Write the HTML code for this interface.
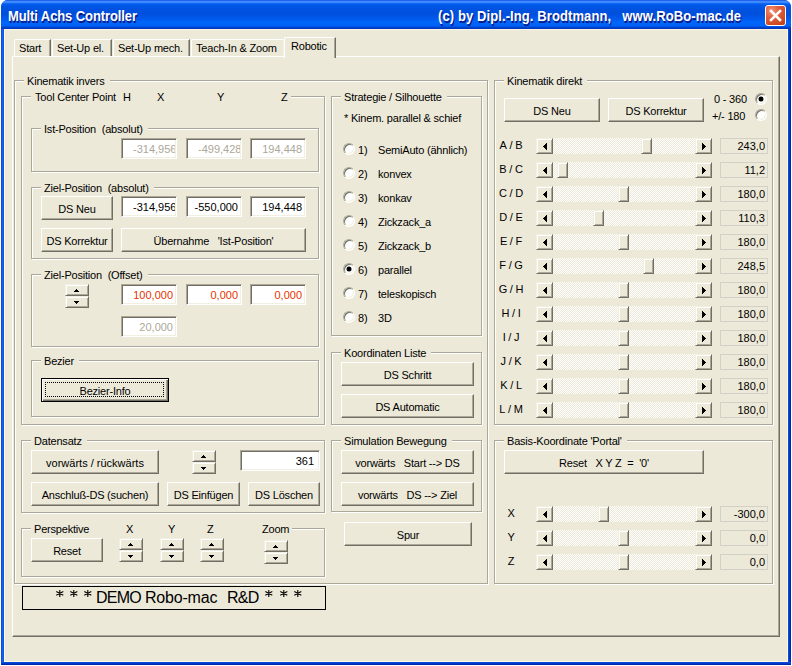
<!DOCTYPE html><html><head><meta charset="utf-8"><style>
html,body{margin:0;padding:0;}
body{width:792px;height:666px;position:relative;overflow:hidden;background:#fff;font-family:"Liberation Sans",sans-serif;font-size:11px;color:#000;letter-spacing:-0.2px;}
div{position:absolute;box-sizing:border-box;}
.t{white-space:nowrap;line-height:13px;}
.fg{border:1px solid #ACA899;}
.fw{border:1px solid #fff;}
.fl{background:#ECE9D8;padding:0 5px 0 3px;white-space:nowrap;line-height:13px;}
.btn{background:#ECE9D8;border-top:1px solid #fff;border-left:1px solid #fff;border-right:1px solid #716F64;border-bottom:1px solid #716F64;box-shadow:inset -1px -1px 0 #ACA899;display:flex;align-items:center;justify-content:center;white-space:nowrap;}
.btn span{position:relative;top:1px;}
.btn.def{border:1px solid #000;box-shadow:inset 1px 1px 0 #fff,inset -1px -1px 0 #716F64,inset -2px -2px 0 #ACA899;}
.btn.def:after{content:"";position:absolute;left:3px;top:3px;right:4px;bottom:4px;border:1px dotted #000;}
.tb{background:#fff;border-top:1px solid #ACA899;border-left:1px solid #ACA899;border-right:1px solid #fff;border-bottom:1px solid #fff;box-shadow:inset 1px 1px 0 #716F64,inset -1px -1px 0 #F1EFE2;white-space:nowrap;overflow:hidden;}
.tb span{position:absolute;right:3px;top:4px;line-height:13px;letter-spacing:0;}
.spin{background:#ECE9D8;border-top:1px solid #F1EFE2;border-left:1px solid #F1EFE2;border-right:1px solid #716F64;border-bottom:1px solid #716F64;box-shadow:inset 1px 1px 0 #fff,inset -1px -1px 0 #ACA899;}
.spin i{position:absolute;left:50%;margin-left:-3px;width:0;height:0;border-left:3px solid transparent;border-right:3px solid transparent;}
.spin i.up{top:3px;border-bottom:3px solid #000;}
.spin i.dn{top:4px;border-top:3px solid #000;}
.sbtn{background:#ECE9D8;border-top:1px solid #F1EFE2;border-left:1px solid #F1EFE2;border-right:1px solid #716F64;border-bottom:1px solid #716F64;box-shadow:inset 1px 1px 0 #fff,inset -1px -1px 0 #ACA899;}
.sbtn i{position:absolute;top:4px;width:0;height:0;border-top:4px solid transparent;border-bottom:4px solid transparent;}
.sbtn i.lf{left:6px;border-right:4px solid #000;}
.sbtn i.rt{left:6px;border-left:4px solid #000;}
.track{background:repeating-conic-gradient(#fff 0 25%,#ECE9D8 0 50%) 0 0/2px 2px;}
.vb{border:1px solid #D4D0C8;white-space:nowrap;}
.vb span{position:absolute;right:2px;top:1px;line-height:13px;letter-spacing:0;}
.radio{width:12px;height:12px;border-radius:50%;background:#fff;border:1px solid;border-color:#ACA899 #fff #fff #ACA899;box-shadow:inset 1px 1px 0 #716F64,inset -1px -1px 0 #F1EFE2;}
.radio i{position:absolute;left:3px;top:3px;width:4px;height:4px;background:#000;border-radius:50%;box-shadow:0 0 0 0.5px #000;}
.tab{background:#ECE9D8;border-top:1px solid #fff;border-left:1px solid #fff;border-right:1px solid #716F64;box-shadow:inset -1px 0 0 #ACA899;border-top-left-radius:2px;}
</style></head><body>

<div style="left:0;top:0;width:792px;height:666px;background:#fff"></div>
<div style="left:1px;top:0;width:790px;height:665px;background:#0A3BD7;border-radius:7px 7px 0 0"></div>
<div style="left:1px;top:0;width:790px;height:29px;border-radius:7px 7px 0 0;background:linear-gradient(#0831D9 0px,#3D8EFF 1px,#3A88FC 2.5px,#0E67F4 3.5px,#0058E8 5px,#0053E0 8px,#0050DD 14px,#005AEE 19px,#0066FA 22px,#0062F6 26px,#0046D5 27px,#0033B8 29px)"></div>
<div style="left:1px;top:29px;width:3px;height:633px;background:linear-gradient(90deg,#0A3AD5,#1466F3 50%,#0651E0)"></div>
<div style="left:788px;top:29px;width:3px;height:633px;background:linear-gradient(90deg,#0652E2,#0038CC 50%,#001E9E)"></div>
<div style="left:1px;top:662px;width:790px;height:3px;background:linear-gradient(#0652E2,#0038CC 50%,#001E9E)"></div>
<div style="left:4px;top:29px;width:784px;height:633px;background:#FFF7E0"></div>
<div style="left:5px;top:30px;width:782px;height:631px;background:#ECE9D8"></div>
<div class="t" style="left:8px;top:8px;font-weight:bold;font-size:13px;line-height:16px;color:#fff;text-shadow:1px 1px 0 #0A1883;letter-spacing:-0.1px;transform:scaleY(1.12);transform-origin:0 0">Multi Achs Controller</div>
<div class="t" style="left:438px;top:8px;font-weight:bold;font-size:13px;line-height:16px;color:#fff;text-shadow:1px 1px 0 #0A1883;white-space:pre;letter-spacing:0.1px;transform:scaleY(1.12);transform-origin:0 0">(c) by Dipl.-Ing. Brodtmann,   www.RoBo-mac.de</div>
<div style="left:765px;top:5px;width:21px;height:21px;border:1px solid #fff;border-radius:3px;background:radial-gradient(circle at 30% 25%,#F0967A 0,#E2603E 35%,#CC4A22 75%,#B83A18 100%)"></div>
<svg style="position:absolute;left:765px;top:5px" width="21" height="21"><path d="M6 6 L15 15 M15 6 L6 15" stroke="#fff" stroke-width="2.6" stroke-linecap="square"/></svg>
<div style="left:12px;top:56px;width:768px;height:581px;background:#ECE9D8;border-top:1px solid #fff;border-left:1px solid #fff;border-right:1px solid #716F64;border-bottom:1px solid #716F64;box-shadow:inset -1px -1px 0 #ACA899"></div>
<div class="tab" style="left:14px;top:39px;width:37px;height:17px;"></div>
<div class="t" style="left:19px;top:42px;">Start</div>
<div class="tab" style="left:52px;top:39px;width:60px;height:17px;"></div>
<div class="t" style="left:57px;top:42px;">Set-Up el.</div>
<div class="tab" style="left:113px;top:39px;width:77px;height:17px;"></div>
<div class="t" style="left:118px;top:42px;">Set-Up mech.</div>
<div class="tab" style="left:191px;top:39px;width:93px;height:17px;border-right:1px solid #F1EFE2;box-shadow:none;"></div>
<div class="t" style="left:196px;top:42px;">Teach-In &amp; Zoom</div>
<div class="tab" style="left:284px;top:37px;width:52px;height:21px"></div>
<div class="t" style="left:291px;top:40px;">Robotic</div>
<div class="fw" style="left:15px;top:81px;width:474px;height:504px"></div>
<div class="fg" style="left:14px;top:80px;width:474px;height:504px"></div>
<div class="fl" style="left:24px;top:75px">Kinematik invers</div>
<div class="fw" style="left:22px;top:97px;width:304px;height:329px"></div>
<div class="fg" style="left:21px;top:96px;width:304px;height:329px"></div>
<div style="left:31px;top:91px;width:260px;height:13px;background:#ECE9D8"></div>
<div class="t" style="left:35px;top:91px;">Tool Center Point</div>
<div class="t" style="left:123px;top:91px;">H</div>
<div class="t" style="left:157px;top:91px;">X</div>
<div class="t" style="left:217px;top:91px;">Y</div>
<div class="t" style="left:281px;top:91px;">Z</div>
<div class="fw" style="left:32px;top:129px;width:288px;height:44px"></div>
<div class="fg" style="left:31px;top:128px;width:288px;height:44px"></div>
<div class="fl" style="left:41px;top:123px">Ist-Position&nbsp;&nbsp;(absolut)</div>
<div class="fw" style="left:32px;top:188px;width:288px;height:72px"></div>
<div class="fg" style="left:31px;top:187px;width:288px;height:72px"></div>
<div class="fl" style="left:41px;top:182px">Ziel-Position&nbsp;&nbsp;(absolut)</div>
<div class="fw" style="left:32px;top:275px;width:288px;height:73px"></div>
<div class="fg" style="left:31px;top:274px;width:288px;height:73px"></div>
<div class="fl" style="left:41px;top:269px">Ziel-Position&nbsp;&nbsp;(Offset)</div>
<div class="fw" style="left:32px;top:361px;width:288px;height:57px"></div>
<div class="fg" style="left:31px;top:360px;width:288px;height:57px"></div>
<div class="fl" style="left:41px;top:355px">Bezier</div>
<div class="fw" style="left:332px;top:97px;width:151px;height:240px"></div>
<div class="fg" style="left:331px;top:96px;width:151px;height:240px"></div>
<div class="fl" style="left:341px;top:91px">Strategie / Silhouette</div>
<div class="fw" style="left:332px;top:353px;width:151px;height:73px"></div>
<div class="fg" style="left:331px;top:352px;width:151px;height:73px"></div>
<div class="fl" style="left:341px;top:347px">Koordinaten Liste</div>
<div class="fw" style="left:22px;top:441px;width:304px;height:73px"></div>
<div class="fg" style="left:21px;top:440px;width:304px;height:73px"></div>
<div class="fl" style="left:31px;top:435px">Datensatz</div>
<div class="fw" style="left:22px;top:529px;width:304px;height:49px"></div>
<div class="fg" style="left:21px;top:528px;width:304px;height:49px"></div>
<div style="left:31px;top:523px;width:261px;height:13px;background:#ECE9D8"></div>
<div class="t" style="left:34px;top:523px;">Perspektive</div>
<div class="fw" style="left:332px;top:441px;width:151px;height:72px"></div>
<div class="fg" style="left:331px;top:440px;width:151px;height:72px"></div>
<div class="fl" style="left:341px;top:435px">Simulation Bewegung</div>
<div class="fw" style="left:495px;top:81px;width:279px;height:345px"></div>
<div class="fg" style="left:494px;top:80px;width:279px;height:345px"></div>
<div class="fl" style="left:504px;top:75px">Kinematik direkt</div>
<div class="fw" style="left:495px;top:441px;width:279px;height:144px"></div>
<div class="fg" style="left:494px;top:440px;width:279px;height:144px"></div>
<div class="fl" style="left:504px;top:435px">Basis-Koordinate 'Portal'</div>
<div class="tb" style="left:121px;top:138px;width:56px;height:21px;color:#ACA899"><span style="right:1px;left:11px;overflow:hidden">-314,956</span></div>
<div class="tb" style="left:186px;top:138px;width:56px;height:21px;color:#ACA899"><span style="right:1px;left:11px;overflow:hidden">-499,428</span></div>
<div class="tb" style="left:250px;top:138px;width:56px;height:21px;color:#ACA899"><span>194,448</span></div>
<div class="btn " style="left:41px;top:196px;width:72px;height:24px;"><span>DS Neu</span></div>
<div class="tb" style="left:121px;top:196px;width:56px;height:21px;color:#000"><span style="right:1px;left:11px;overflow:hidden">-314,956</span></div>
<div class="tb" style="left:186px;top:196px;width:56px;height:21px;color:#000"><span>-550,000</span></div>
<div class="tb" style="left:250px;top:196px;width:56px;height:21px;color:#000"><span>194,448</span></div>
<div class="btn " style="left:41px;top:228px;width:72px;height:24px;"><span>DS Korrektur</span></div>
<div class="btn " style="left:121px;top:228px;width:185px;height:24px;"><span>Übernahme&nbsp;&nbsp;&nbsp;'Ist-Position'</span></div>
<div class="spin" style="left:65px;top:284px;width:24px;height:12px"></div>
<svg style="position:absolute;left:74px;top:289px" width="5" height="3" shape-rendering="crispEdges"><path d="M2 0h1v1h-1z M1 1h3v1h-3z M0 2h5v1h-5z" fill="#000"/></svg>
<div class="spin" style="left:65px;top:296px;width:24px;height:12px"></div>
<svg style="position:absolute;left:74px;top:301px" width="5" height="3" shape-rendering="crispEdges"><path d="M0 0h5v1h-5z M1 1h3v1h-3z M2 2h1v1h-1z" fill="#000"/></svg>
<div class="tb" style="left:121px;top:284px;width:56px;height:21px;color:#E63300"><span>100,000</span></div>
<div class="tb" style="left:186px;top:284px;width:56px;height:21px;color:#E63300"><span>0,000</span></div>
<div class="tb" style="left:250px;top:284px;width:56px;height:21px;color:#E63300"><span>0,000</span></div>
<div class="tb" style="left:121px;top:316px;width:56px;height:21px;color:#ACA899"><span>20,000</span></div>
<div class="btn def" style="left:41px;top:378px;width:128px;height:24px;"><span>Bezier-Info</span></div>
<div class="t" style="left:344px;top:112px;">* Kinem. parallel &amp; schief</div>
<div class="radio" style="left:343px;top:143px"></div>
<div class="t" style="left:358px;top:144px;">1)</div>
<div class="t" style="left:378px;top:144px;">SemiAuto (ähnlich)</div>
<div class="radio" style="left:343px;top:167px"></div>
<div class="t" style="left:358px;top:168px;">2)</div>
<div class="t" style="left:378px;top:168px;">konvex</div>
<div class="radio" style="left:343px;top:191px"></div>
<div class="t" style="left:358px;top:192px;">3)</div>
<div class="t" style="left:378px;top:192px;">konkav</div>
<div class="radio" style="left:343px;top:215px"></div>
<div class="t" style="left:358px;top:216px;">4)</div>
<div class="t" style="left:378px;top:216px;">Zickzack_a</div>
<div class="radio" style="left:343px;top:239px"></div>
<div class="t" style="left:358px;top:240px;">5)</div>
<div class="t" style="left:378px;top:240px;">Zickzack_b</div>
<div class="radio" style="left:343px;top:263px"><i></i></div>
<div class="t" style="left:358px;top:264px;">6)</div>
<div class="t" style="left:378px;top:264px;">parallel</div>
<div class="radio" style="left:343px;top:287px"></div>
<div class="t" style="left:358px;top:288px;">7)</div>
<div class="t" style="left:378px;top:288px;">teleskopisch</div>
<div class="radio" style="left:343px;top:311px"></div>
<div class="t" style="left:358px;top:312px;">8)</div>
<div class="t" style="left:378px;top:312px;">3D</div>
<div class="btn " style="left:341px;top:362px;width:133px;height:24px;"><span>DS Schritt</span></div>
<div class="btn " style="left:341px;top:394px;width:133px;height:24px;"><span>DS Automatic</span></div>
<div class="btn " style="left:31px;top:450px;width:128px;height:24px;letter-spacing:0"><span>vorwärts / rückwärts</span></div>
<div class="spin" style="left:192px;top:450px;width:24px;height:12px"></div>
<svg style="position:absolute;left:201px;top:455px" width="5" height="3" shape-rendering="crispEdges"><path d="M2 0h1v1h-1z M1 1h3v1h-3z M0 2h5v1h-5z" fill="#000"/></svg>
<div class="spin" style="left:192px;top:462px;width:24px;height:12px"></div>
<svg style="position:absolute;left:201px;top:467px" width="5" height="3" shape-rendering="crispEdges"><path d="M0 0h5v1h-5z M1 1h3v1h-3z M2 2h1v1h-1z" fill="#000"/></svg>
<div class="tb" style="left:240px;top:450px;width:80px;height:21px"><span style="right:5px">361</span></div>
<div class="btn " style="left:31px;top:482px;width:128px;height:24px;"><span>Anschluß-DS (suchen)</span></div>
<div class="btn " style="left:167px;top:482px;width:73px;height:24px;"><span>DS Einfügen</span></div>
<div class="btn " style="left:248px;top:482px;width:72px;height:24px;"><span>DS Löschen</span></div>
<div class="btn " style="left:31px;top:538px;width:72px;height:24px;"><span>Reset</span></div>
<div class="t" style="left:126px;top:523px;">X</div>
<div class="t" style="left:168px;top:523px;">Y</div>
<div class="t" style="left:207px;top:523px;">Z</div>
<div class="t" style="left:262px;top:523px;">Zoom</div>
<div class="spin" style="left:119px;top:538px;width:24px;height:12px"></div>
<svg style="position:absolute;left:128px;top:543px" width="5" height="3" shape-rendering="crispEdges"><path d="M2 0h1v1h-1z M1 1h3v1h-3z M0 2h5v1h-5z" fill="#000"/></svg>
<div class="spin" style="left:119px;top:550px;width:24px;height:12px"></div>
<svg style="position:absolute;left:128px;top:555px" width="5" height="3" shape-rendering="crispEdges"><path d="M0 0h5v1h-5z M1 1h3v1h-3z M2 2h1v1h-1z" fill="#000"/></svg>
<div class="spin" style="left:160px;top:538px;width:24px;height:12px"></div>
<svg style="position:absolute;left:169px;top:543px" width="5" height="3" shape-rendering="crispEdges"><path d="M2 0h1v1h-1z M1 1h3v1h-3z M0 2h5v1h-5z" fill="#000"/></svg>
<div class="spin" style="left:160px;top:550px;width:24px;height:12px"></div>
<svg style="position:absolute;left:169px;top:555px" width="5" height="3" shape-rendering="crispEdges"><path d="M0 0h5v1h-5z M1 1h3v1h-3z M2 2h1v1h-1z" fill="#000"/></svg>
<div class="spin" style="left:200px;top:538px;width:24px;height:12px"></div>
<svg style="position:absolute;left:209px;top:543px" width="5" height="3" shape-rendering="crispEdges"><path d="M2 0h1v1h-1z M1 1h3v1h-3z M0 2h5v1h-5z" fill="#000"/></svg>
<div class="spin" style="left:200px;top:550px;width:24px;height:12px"></div>
<svg style="position:absolute;left:209px;top:555px" width="5" height="3" shape-rendering="crispEdges"><path d="M0 0h5v1h-5z M1 1h3v1h-3z M2 2h1v1h-1z" fill="#000"/></svg>
<div class="spin" style="left:264px;top:540px;width:24px;height:12px"></div>
<svg style="position:absolute;left:273px;top:545px" width="5" height="3" shape-rendering="crispEdges"><path d="M2 0h1v1h-1z M1 1h3v1h-3z M0 2h5v1h-5z" fill="#000"/></svg>
<div class="spin" style="left:264px;top:552px;width:24px;height:12px"></div>
<svg style="position:absolute;left:273px;top:557px" width="5" height="3" shape-rendering="crispEdges"><path d="M0 0h5v1h-5z M1 1h3v1h-3z M2 2h1v1h-1z" fill="#000"/></svg>
<div class="btn " style="left:341px;top:450px;width:133px;height:24px;"><span>vorwärts&nbsp;&nbsp;&nbsp;Start --&gt; DS</span></div>
<div class="btn " style="left:341px;top:482px;width:133px;height:24px;"><span>vorwärts&nbsp;&nbsp;&nbsp;DS --&gt; Ziel</span></div>
<div class="btn " style="left:344px;top:522px;width:128px;height:24px;"><span>Spur</span></div>
<div style="left:22px;top:586px;width:304px;height:24px;border:1px solid #000"></div>
<div class="t" style="left:96px;top:588px;font-size:16px;line-height:20px;letter-spacing:-0.8px">DEMO</div>
<div class="t" style="left:145px;top:588px;font-size:16px;line-height:20px;letter-spacing:-0.2px">Robo-mac</div>
<div class="t" style="left:227px;top:588px;font-size:16px;line-height:20px;letter-spacing:-0.8px">R&amp;D</div>
<svg style="position:absolute;left:55.7px;top:590px" width="8" height="7"><path d="M3.8 0 V7 M0.3 1.6 L7.3 5.2 M0.3 5.2 L7.3 1.6" stroke="#000" stroke-width="1.1" fill="none"/></svg>
<svg style="position:absolute;left:69.7px;top:590px" width="8" height="7"><path d="M3.8 0 V7 M0.3 1.6 L7.3 5.2 M0.3 5.2 L7.3 1.6" stroke="#000" stroke-width="1.1" fill="none"/></svg>
<svg style="position:absolute;left:83.7px;top:590px" width="8" height="7"><path d="M3.8 0 V7 M0.3 1.6 L7.3 5.2 M0.3 5.2 L7.3 1.6" stroke="#000" stroke-width="1.1" fill="none"/></svg>
<svg style="position:absolute;left:265px;top:590px" width="8" height="7"><path d="M3.8 0 V7 M0.3 1.6 L7.3 5.2 M0.3 5.2 L7.3 1.6" stroke="#000" stroke-width="1.1" fill="none"/></svg>
<svg style="position:absolute;left:280px;top:590px" width="8" height="7"><path d="M3.8 0 V7 M0.3 1.6 L7.3 5.2 M0.3 5.2 L7.3 1.6" stroke="#000" stroke-width="1.1" fill="none"/></svg>
<svg style="position:absolute;left:294px;top:590px" width="8" height="7"><path d="M3.8 0 V7 M0.3 1.6 L7.3 5.2 M0.3 5.2 L7.3 1.6" stroke="#000" stroke-width="1.1" fill="none"/></svg>
<div class="btn " style="left:504px;top:98px;width:96px;height:24px;"><span>DS Neu</span></div>
<div class="btn " style="left:608px;top:98px;width:96px;height:24px;"><span>DS Korrektur</span></div>
<div class="t" style="left:714px;top:93px;">0 - 360</div>
<div class="t" style="left:712px;top:110px;">+/- 180</div>
<div class="radio" style="left:755px;top:93px"><i></i></div>
<div class="radio" style="left:755px;top:109px"></div>
<div class="track" style="left:553px;top:138px;width:142px;height:16px"></div>
<div class="sbtn" style="left:536px;top:138px;width:17px;height:16px"></div>
<svg style="position:absolute;left:543px;top:143px" width="4" height="7" shape-rendering="crispEdges"><path d="M3 0h1v7h-1z M2 1h1v5h-1z M1 2h1v3h-1z M0 3h1v1h-1z" fill="#000"/></svg>
<div class="sbtn" style="left:695px;top:138px;width:17px;height:16px"></div>
<svg style="position:absolute;left:702px;top:143px" width="4" height="7" shape-rendering="crispEdges"><path d="M0 0h1v7h-1z M1 1h1v5h-1z M2 2h1v3h-1z M3 3h1v1h-1z" fill="#000"/></svg>
<div class="sbtn" style="left:641px;top:138px;width:11px;height:16px"></div>
<div class="vb" style="left:720px;top:138px;width:48px;height:16px"><span>243,0</span></div>
<div class="t" style="left:491px;top:139px;width:40px;text-align:center">A&nbsp;/&nbsp;B</div>
<div class="track" style="left:553px;top:162px;width:142px;height:16px"></div>
<div class="sbtn" style="left:536px;top:162px;width:17px;height:16px"></div>
<svg style="position:absolute;left:543px;top:167px" width="4" height="7" shape-rendering="crispEdges"><path d="M3 0h1v7h-1z M2 1h1v5h-1z M1 2h1v3h-1z M0 3h1v1h-1z" fill="#000"/></svg>
<div class="sbtn" style="left:695px;top:162px;width:17px;height:16px"></div>
<svg style="position:absolute;left:702px;top:167px" width="4" height="7" shape-rendering="crispEdges"><path d="M0 0h1v7h-1z M1 1h1v5h-1z M2 2h1v3h-1z M3 3h1v1h-1z" fill="#000"/></svg>
<div class="sbtn" style="left:557px;top:162px;width:11px;height:16px"></div>
<div class="vb" style="left:720px;top:162px;width:48px;height:16px"><span>11,2</span></div>
<div class="t" style="left:491px;top:163px;width:40px;text-align:center">B&nbsp;/&nbsp;C</div>
<div class="track" style="left:553px;top:186px;width:142px;height:16px"></div>
<div class="sbtn" style="left:536px;top:186px;width:17px;height:16px"></div>
<svg style="position:absolute;left:543px;top:191px" width="4" height="7" shape-rendering="crispEdges"><path d="M3 0h1v7h-1z M2 1h1v5h-1z M1 2h1v3h-1z M0 3h1v1h-1z" fill="#000"/></svg>
<div class="sbtn" style="left:695px;top:186px;width:17px;height:16px"></div>
<svg style="position:absolute;left:702px;top:191px" width="4" height="7" shape-rendering="crispEdges"><path d="M0 0h1v7h-1z M1 1h1v5h-1z M2 2h1v3h-1z M3 3h1v1h-1z" fill="#000"/></svg>
<div class="sbtn" style="left:618px;top:186px;width:11px;height:16px"></div>
<div class="vb" style="left:720px;top:186px;width:48px;height:16px"><span>180,0</span></div>
<div class="t" style="left:491px;top:187px;width:40px;text-align:center">C&nbsp;/&nbsp;D</div>
<div class="track" style="left:553px;top:210px;width:142px;height:16px"></div>
<div class="sbtn" style="left:536px;top:210px;width:17px;height:16px"></div>
<svg style="position:absolute;left:543px;top:215px" width="4" height="7" shape-rendering="crispEdges"><path d="M3 0h1v7h-1z M2 1h1v5h-1z M1 2h1v3h-1z M0 3h1v1h-1z" fill="#000"/></svg>
<div class="sbtn" style="left:695px;top:210px;width:17px;height:16px"></div>
<svg style="position:absolute;left:702px;top:215px" width="4" height="7" shape-rendering="crispEdges"><path d="M0 0h1v7h-1z M1 1h1v5h-1z M2 2h1v3h-1z M3 3h1v1h-1z" fill="#000"/></svg>
<div class="sbtn" style="left:593px;top:210px;width:11px;height:16px"></div>
<div class="vb" style="left:720px;top:210px;width:48px;height:16px"><span>110,3</span></div>
<div class="t" style="left:491px;top:211px;width:40px;text-align:center">D&nbsp;/&nbsp;E</div>
<div class="track" style="left:553px;top:234px;width:142px;height:16px"></div>
<div class="sbtn" style="left:536px;top:234px;width:17px;height:16px"></div>
<svg style="position:absolute;left:543px;top:239px" width="4" height="7" shape-rendering="crispEdges"><path d="M3 0h1v7h-1z M2 1h1v5h-1z M1 2h1v3h-1z M0 3h1v1h-1z" fill="#000"/></svg>
<div class="sbtn" style="left:695px;top:234px;width:17px;height:16px"></div>
<svg style="position:absolute;left:702px;top:239px" width="4" height="7" shape-rendering="crispEdges"><path d="M0 0h1v7h-1z M1 1h1v5h-1z M2 2h1v3h-1z M3 3h1v1h-1z" fill="#000"/></svg>
<div class="sbtn" style="left:618px;top:234px;width:11px;height:16px"></div>
<div class="vb" style="left:720px;top:234px;width:48px;height:16px"><span>180,0</span></div>
<div class="t" style="left:491px;top:235px;width:40px;text-align:center">E&nbsp;/&nbsp;F</div>
<div class="track" style="left:553px;top:258px;width:142px;height:16px"></div>
<div class="sbtn" style="left:536px;top:258px;width:17px;height:16px"></div>
<svg style="position:absolute;left:543px;top:263px" width="4" height="7" shape-rendering="crispEdges"><path d="M3 0h1v7h-1z M2 1h1v5h-1z M1 2h1v3h-1z M0 3h1v1h-1z" fill="#000"/></svg>
<div class="sbtn" style="left:695px;top:258px;width:17px;height:16px"></div>
<svg style="position:absolute;left:702px;top:263px" width="4" height="7" shape-rendering="crispEdges"><path d="M0 0h1v7h-1z M1 1h1v5h-1z M2 2h1v3h-1z M3 3h1v1h-1z" fill="#000"/></svg>
<div class="sbtn" style="left:643px;top:258px;width:11px;height:16px"></div>
<div class="vb" style="left:720px;top:258px;width:48px;height:16px"><span>248,5</span></div>
<div class="t" style="left:491px;top:259px;width:40px;text-align:center">F&nbsp;/&nbsp;G</div>
<div class="track" style="left:553px;top:282px;width:142px;height:16px"></div>
<div class="sbtn" style="left:536px;top:282px;width:17px;height:16px"></div>
<svg style="position:absolute;left:543px;top:287px" width="4" height="7" shape-rendering="crispEdges"><path d="M3 0h1v7h-1z M2 1h1v5h-1z M1 2h1v3h-1z M0 3h1v1h-1z" fill="#000"/></svg>
<div class="sbtn" style="left:695px;top:282px;width:17px;height:16px"></div>
<svg style="position:absolute;left:702px;top:287px" width="4" height="7" shape-rendering="crispEdges"><path d="M0 0h1v7h-1z M1 1h1v5h-1z M2 2h1v3h-1z M3 3h1v1h-1z" fill="#000"/></svg>
<div class="sbtn" style="left:618px;top:282px;width:11px;height:16px"></div>
<div class="vb" style="left:720px;top:282px;width:48px;height:16px"><span>180,0</span></div>
<div class="t" style="left:491px;top:283px;width:40px;text-align:center">G&nbsp;/&nbsp;H</div>
<div class="track" style="left:553px;top:306px;width:142px;height:16px"></div>
<div class="sbtn" style="left:536px;top:306px;width:17px;height:16px"></div>
<svg style="position:absolute;left:543px;top:311px" width="4" height="7" shape-rendering="crispEdges"><path d="M3 0h1v7h-1z M2 1h1v5h-1z M1 2h1v3h-1z M0 3h1v1h-1z" fill="#000"/></svg>
<div class="sbtn" style="left:695px;top:306px;width:17px;height:16px"></div>
<svg style="position:absolute;left:702px;top:311px" width="4" height="7" shape-rendering="crispEdges"><path d="M0 0h1v7h-1z M1 1h1v5h-1z M2 2h1v3h-1z M3 3h1v1h-1z" fill="#000"/></svg>
<div class="sbtn" style="left:618px;top:306px;width:11px;height:16px"></div>
<div class="vb" style="left:720px;top:306px;width:48px;height:16px"><span>180,0</span></div>
<div class="t" style="left:491px;top:307px;width:40px;text-align:center">H&nbsp;/&nbsp;I</div>
<div class="track" style="left:553px;top:330px;width:142px;height:16px"></div>
<div class="sbtn" style="left:536px;top:330px;width:17px;height:16px"></div>
<svg style="position:absolute;left:543px;top:335px" width="4" height="7" shape-rendering="crispEdges"><path d="M3 0h1v7h-1z M2 1h1v5h-1z M1 2h1v3h-1z M0 3h1v1h-1z" fill="#000"/></svg>
<div class="sbtn" style="left:695px;top:330px;width:17px;height:16px"></div>
<svg style="position:absolute;left:702px;top:335px" width="4" height="7" shape-rendering="crispEdges"><path d="M0 0h1v7h-1z M1 1h1v5h-1z M2 2h1v3h-1z M3 3h1v1h-1z" fill="#000"/></svg>
<div class="sbtn" style="left:618px;top:330px;width:11px;height:16px"></div>
<div class="vb" style="left:720px;top:330px;width:48px;height:16px"><span>180,0</span></div>
<div class="t" style="left:491px;top:331px;width:40px;text-align:center">I&nbsp;/&nbsp;J</div>
<div class="track" style="left:553px;top:354px;width:142px;height:16px"></div>
<div class="sbtn" style="left:536px;top:354px;width:17px;height:16px"></div>
<svg style="position:absolute;left:543px;top:359px" width="4" height="7" shape-rendering="crispEdges"><path d="M3 0h1v7h-1z M2 1h1v5h-1z M1 2h1v3h-1z M0 3h1v1h-1z" fill="#000"/></svg>
<div class="sbtn" style="left:695px;top:354px;width:17px;height:16px"></div>
<svg style="position:absolute;left:702px;top:359px" width="4" height="7" shape-rendering="crispEdges"><path d="M0 0h1v7h-1z M1 1h1v5h-1z M2 2h1v3h-1z M3 3h1v1h-1z" fill="#000"/></svg>
<div class="sbtn" style="left:618px;top:354px;width:11px;height:16px"></div>
<div class="vb" style="left:720px;top:354px;width:48px;height:16px"><span>180,0</span></div>
<div class="t" style="left:491px;top:355px;width:40px;text-align:center">J&nbsp;/&nbsp;K</div>
<div class="track" style="left:553px;top:378px;width:142px;height:16px"></div>
<div class="sbtn" style="left:536px;top:378px;width:17px;height:16px"></div>
<svg style="position:absolute;left:543px;top:383px" width="4" height="7" shape-rendering="crispEdges"><path d="M3 0h1v7h-1z M2 1h1v5h-1z M1 2h1v3h-1z M0 3h1v1h-1z" fill="#000"/></svg>
<div class="sbtn" style="left:695px;top:378px;width:17px;height:16px"></div>
<svg style="position:absolute;left:702px;top:383px" width="4" height="7" shape-rendering="crispEdges"><path d="M0 0h1v7h-1z M1 1h1v5h-1z M2 2h1v3h-1z M3 3h1v1h-1z" fill="#000"/></svg>
<div class="sbtn" style="left:618px;top:378px;width:11px;height:16px"></div>
<div class="vb" style="left:720px;top:378px;width:48px;height:16px"><span>180,0</span></div>
<div class="t" style="left:491px;top:379px;width:40px;text-align:center">K&nbsp;/&nbsp;L</div>
<div class="track" style="left:553px;top:402px;width:142px;height:16px"></div>
<div class="sbtn" style="left:536px;top:402px;width:17px;height:16px"></div>
<svg style="position:absolute;left:543px;top:407px" width="4" height="7" shape-rendering="crispEdges"><path d="M3 0h1v7h-1z M2 1h1v5h-1z M1 2h1v3h-1z M0 3h1v1h-1z" fill="#000"/></svg>
<div class="sbtn" style="left:695px;top:402px;width:17px;height:16px"></div>
<svg style="position:absolute;left:702px;top:407px" width="4" height="7" shape-rendering="crispEdges"><path d="M0 0h1v7h-1z M1 1h1v5h-1z M2 2h1v3h-1z M3 3h1v1h-1z" fill="#000"/></svg>
<div class="sbtn" style="left:618px;top:402px;width:11px;height:16px"></div>
<div class="vb" style="left:720px;top:402px;width:48px;height:16px"><span>180,0</span></div>
<div class="t" style="left:491px;top:403px;width:40px;text-align:center">L&nbsp;/&nbsp;M</div>
<div class="btn " style="left:504px;top:450px;width:200px;height:24px;"><span>Reset&nbsp;&nbsp;&nbsp;X Y Z&nbsp;&nbsp;=&nbsp;&nbsp;'0'</span></div>
<div class="track" style="left:553px;top:506px;width:142px;height:16px"></div>
<div class="sbtn" style="left:536px;top:506px;width:17px;height:16px"></div>
<svg style="position:absolute;left:543px;top:511px" width="4" height="7" shape-rendering="crispEdges"><path d="M3 0h1v7h-1z M2 1h1v5h-1z M1 2h1v3h-1z M0 3h1v1h-1z" fill="#000"/></svg>
<div class="sbtn" style="left:695px;top:506px;width:17px;height:16px"></div>
<svg style="position:absolute;left:702px;top:511px" width="4" height="7" shape-rendering="crispEdges"><path d="M0 0h1v7h-1z M1 1h1v5h-1z M2 2h1v3h-1z M3 3h1v1h-1z" fill="#000"/></svg>
<div class="sbtn" style="left:598px;top:506px;width:11px;height:16px"></div>
<div class="vb" style="left:720px;top:506px;width:48px;height:16px"><span>-300,0</span></div>
<div class="t" style="left:491px;top:507px;width:40px;text-align:center">X</div>
<div class="track" style="left:553px;top:530px;width:142px;height:16px"></div>
<div class="sbtn" style="left:536px;top:530px;width:17px;height:16px"></div>
<svg style="position:absolute;left:543px;top:535px" width="4" height="7" shape-rendering="crispEdges"><path d="M3 0h1v7h-1z M2 1h1v5h-1z M1 2h1v3h-1z M0 3h1v1h-1z" fill="#000"/></svg>
<div class="sbtn" style="left:695px;top:530px;width:17px;height:16px"></div>
<svg style="position:absolute;left:702px;top:535px" width="4" height="7" shape-rendering="crispEdges"><path d="M0 0h1v7h-1z M1 1h1v5h-1z M2 2h1v3h-1z M3 3h1v1h-1z" fill="#000"/></svg>
<div class="sbtn" style="left:618px;top:530px;width:11px;height:16px"></div>
<div class="vb" style="left:720px;top:530px;width:48px;height:16px"><span>0,0</span></div>
<div class="t" style="left:491px;top:531px;width:40px;text-align:center">Y</div>
<div class="track" style="left:553px;top:554px;width:142px;height:16px"></div>
<div class="sbtn" style="left:536px;top:554px;width:17px;height:16px"></div>
<svg style="position:absolute;left:543px;top:559px" width="4" height="7" shape-rendering="crispEdges"><path d="M3 0h1v7h-1z M2 1h1v5h-1z M1 2h1v3h-1z M0 3h1v1h-1z" fill="#000"/></svg>
<div class="sbtn" style="left:695px;top:554px;width:17px;height:16px"></div>
<svg style="position:absolute;left:702px;top:559px" width="4" height="7" shape-rendering="crispEdges"><path d="M0 0h1v7h-1z M1 1h1v5h-1z M2 2h1v3h-1z M3 3h1v1h-1z" fill="#000"/></svg>
<div class="sbtn" style="left:618px;top:554px;width:11px;height:16px"></div>
<div class="vb" style="left:720px;top:554px;width:48px;height:16px"><span>0,0</span></div>
<div class="t" style="left:491px;top:555px;width:40px;text-align:center">Z</div>
</body></html>
